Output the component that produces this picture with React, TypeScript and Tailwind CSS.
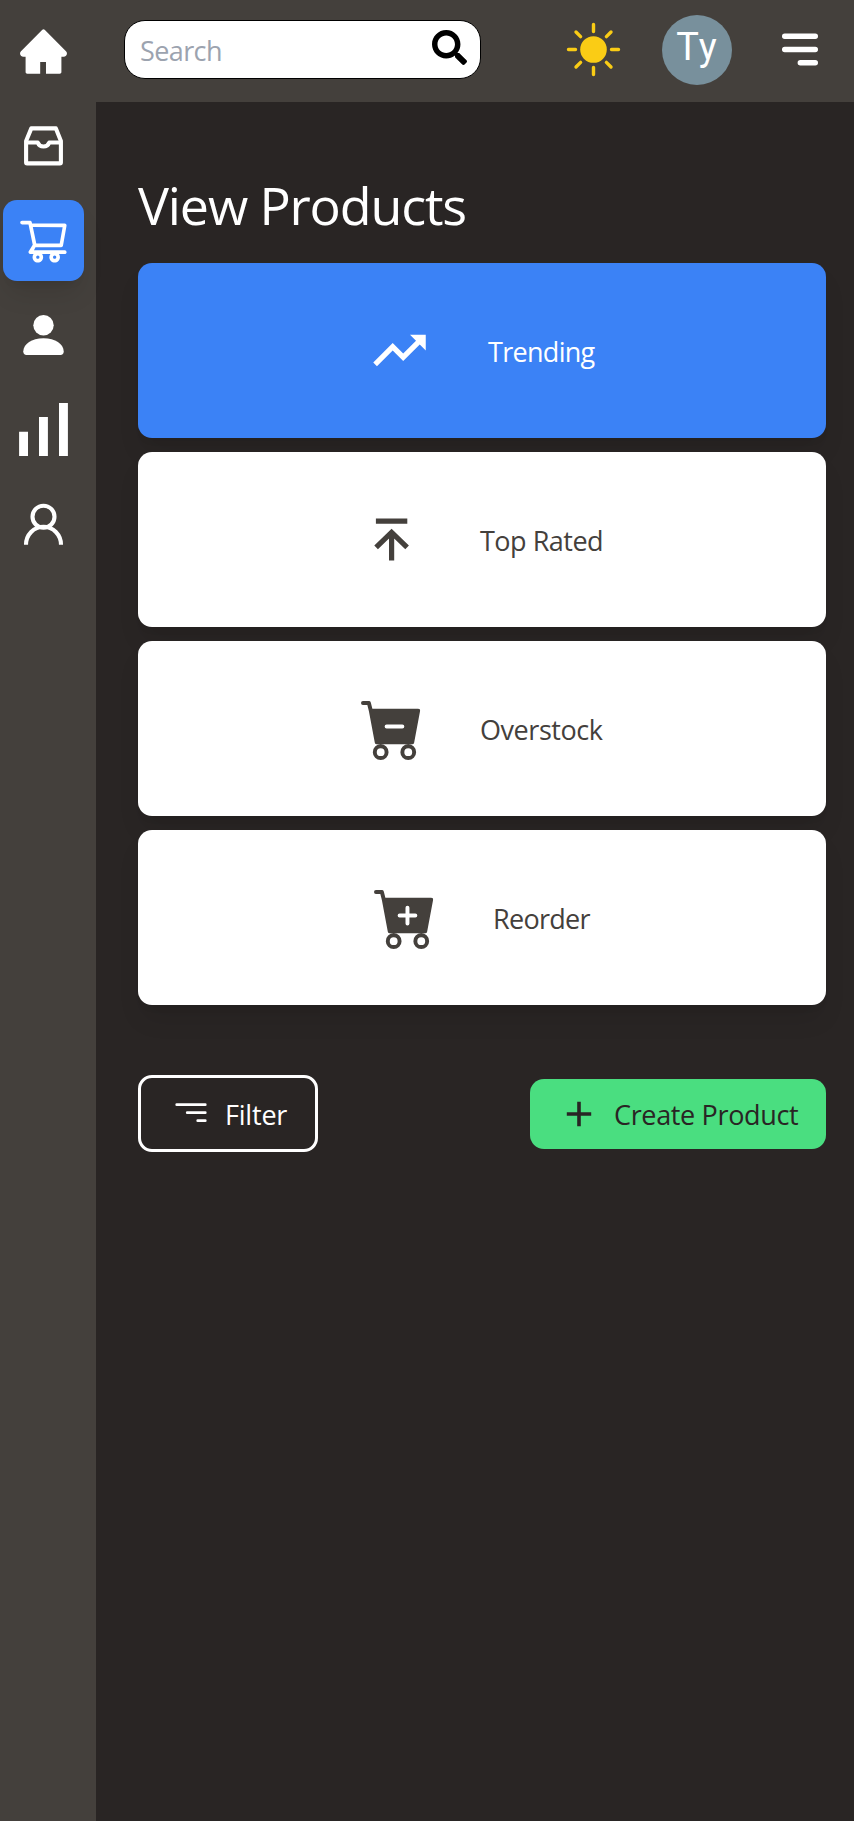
import type { ReactNode } from "react";
import { AiFillHome, AiOutlineShoppingCart } from "react-icons/ai";
import { BsCartDashFill, BsCartPlusFill } from "react-icons/bs";
import { FaSearch } from "react-icons/fa";
import { MdTrendingUp } from "react-icons/md";

const InboxIcon = () => (
  <svg viewBox="0.5 0 56 56" className="size-14" fill="none" stroke="currentColor" strokeWidth="4.1" strokeLinejoin="round">
    <path d="M15.8 10.4H40.4L45.4 23V44.4Q45.4 45.4 44.4 45.4H11.6Q10.6 45.4 10.6 44.4V23Z" />
    <path d="M10.5 24.5H22.2A6.2 6.2 0 0 0 33.8 24.5H45.5" />
  </svg>
);

const PersonFillIcon = () => (
  <svg viewBox="0.5 0 56 56" className="size-14" fill="currentColor">
    <circle cx="28" cy="18.3" r="10.2" />
    <path d="M11 48C9 48 7.8 46.8 7.8 44.2C8.2 37 16 31.3 28 31.3S47.8 37 48.2 44.2C48.2 46.8 47 48 45 48Z" />
  </svg>
);

const BarsIcon = () => (
  <svg viewBox="0.5 1 56 56" className="size-14" fill="currentColor">
    <path d="M3.6 30.7h8.9V55H3.6zM23.5 16h8.9v39h-8.9zM43.5 2h8.9v53h-8.9z" />
  </svg>
);

const PersonIcon = () => (
  <svg viewBox="0.5 0.5 56 56" className="size-14" fill="none" stroke="currentColor" strokeWidth="4.1">
    <circle cx="28" cy="21.2" r="11" />
    <path d="M10.5 49.2A17.5 18 0 0 1 45.5 49.2" />
  </svg>
);

const SunIcon = () => (
  <svg viewBox="-27.5 -27.5 56 56" className="size-14 text-[#facc15]">
    <circle r="13.3" fill="currentColor" />
    <path
      d="M0-25V-18M0 18V25M-25 0H-18M18 0H25M-17.5-17.5L-12.9-12.9M12.9 12.9L17.5 17.5M-17.5 17.5L-12.9 12.9M12.9-12.9L17.5-17.5"
      stroke="currentColor"
      strokeWidth="3.4"
      strokeLinecap="round"
    />
  </svg>
);

const MenuIcon = () => (
  <svg viewBox="0 0.5 38 34" className="h-[34px] w-[38px]" stroke="currentColor" strokeWidth="5.4" strokeLinecap="round">
    <path d="M3.7 3.8H34.3M3.7 17H34.3M19.3 30.2H34.3" />
  </svg>
);

const ToTopIcon = () => (
  <svg viewBox="-0.6 0 63 63" className="size-[63px]" fill="none" stroke="currentColor" strokeWidth="5.2">
    <path d="M14.3 13.2H45.7M30 52.5V23M14.5 39.3L30 24.3L45.5 39.3" />
  </svg>
);

const FilterIcon = () => (
  <svg viewBox="0 0 32 20" className="h-5 w-8" stroke="currentColor" strokeWidth="2.7" strokeLinecap="round">
    <path d="M1.7 1.7H30.3M12.2 9.7H30.3M22.7 17.7H30.3" />
  </svg>
);

const PlusIcon = () => (
  <svg viewBox="0 0 26 26" className="size-[26px]" stroke="currentColor" strokeWidth="3.6">
    <path d="M13 .8V25.2M.8 13H25.2" />
  </svg>
);

const navItems: { name: string; icon: ReactNode; active?: boolean }[] = [
  { name: "home", icon: <AiFillHome className="size-[53px]" /> },
  { name: "inbox", icon: <InboxIcon /> },
  { name: "products", icon: <AiOutlineShoppingCart className="size-[53px]" />, active: true },
  { name: "customers", icon: <PersonFillIcon /> },
  { name: "stats", icon: <BarsIcon /> },
  { name: "account", icon: <PersonIcon /> },
];

const cards = [
  { label: "Trending", icon: <MdTrendingUp className="size-[63px]" />, box: "bg-[#3b82f6] text-white", text: "w-[109px] pl-px tracking-[-0.7px]" },
  { label: "Top Rated", icon: <ToTopIcon />, box: "bg-white text-[#44403c]", text: "w-[123px] tracking-[-0.5px]" },
  { label: "Overstock", icon: <BsCartDashFill className="size-[63px]" />, box: "bg-white text-[#44403c]", text: "w-[123px] tracking-[-0.45px]" },
  { label: "Reorder", icon: <BsCartPlusFill className="size-[63px]" />, box: "bg-white text-[#44403c]", text: "w-[97px] tracking-[-0.7px]" },
];

export default function App() {
  return (
    <div className="flex h-[1821px] w-[854px] overflow-hidden bg-[#292524] font-['Open_Sans',sans-serif] text-[27px] leading-[42px] text-white">
      <nav className="flex w-24 shrink-0 flex-col gap-[13.5px] bg-[#44403c] pt-[11px] pl-[3px]">
        {navItems.map((item) => (
          <div
            key={item.name}
            className={
              item.active
                ? "flex size-[81px] shrink-0 items-center justify-center rounded-[14px] bg-[#3b82f6] shadow-[0_17px_26px_-5px_rgba(0,0,0,0.1),0_7px_10px_-7px_rgba(0,0,0,0.1)]"
                : "flex size-[81px] shrink-0 items-center justify-center"
            }
          >
            {item.icon}
          </div>
        ))}
      </nav>

      <div className="flex min-w-0 grow flex-col">
        <header className="flex h-[102px] shrink-0 items-start bg-[#44403c] pl-7">
          <div className="mt-5 flex h-[59px] w-[357px] items-start justify-between rounded-[21px] border border-black bg-white pr-[13px] pl-[15px]">
            <span className="pt-[9px] tracking-[-0.6px] text-[#9ca3af]">Search</span>
            <FaSearch className="mt-[9px] size-[35px] text-black" />
          </div>
          <div className="mt-[22px] ml-[85px]">
            <SunIcon />
          </div>
          <div className="mt-[15px] ml-10 flex size-[70px] items-center justify-center rounded-full bg-[#78909c] pb-[7px] font-[Roboto,sans-serif] text-[38px] tracking-[1px]">
            Ty
          </div>
          <div className="mt-[33px] ml-[49px]">
            <MenuIcon />
          </div>
        </header>

        <main className="flex flex-col pr-7 pl-[42px]">
          <h1 className="mt-[68px] h-[93px] text-[52px] leading-[70px] tracking-[-1.15px] whitespace-nowrap">View Products</h1>
          <div className="flex flex-col gap-3.5">
            {cards.map((card) => (
              <div
                key={card.label}
                className={`flex h-[175px] items-center justify-center gap-14 rounded-[14px] shadow-[0_17px_26px_-5px_rgba(0,0,0,0.1),0_7px_10px_-7px_rgba(0,0,0,0.1)] ${card.box}`}
              >
                {card.icon}
                <span className={`pt-[3px] whitespace-nowrap ${card.text}`}>{card.label}</span>
              </div>
            ))}
          </div>

          <div className="mt-[70px] flex items-center justify-between">
            <button className="flex h-[77px] w-[180px] items-center rounded-[14px] border-3 border-white pl-[34px]">
              <span className="pb-0.5">
                <FilterIcon />
              </span>
              <span className="ml-[18px] pt-0.5 tracking-[-0.2px]">Filter</span>
            </button>
            <button className="flex h-[70px] w-[296px] items-center rounded-[14px] bg-[#4ade80] pl-9 text-[#292524]">
              <PlusIcon />
              <span className="ml-[22px] pt-0.5 tracking-[-0.35px] whitespace-nowrap">Create Product</span>
            </button>
          </div>
        </main>
      </div>
    </div>
  );
}
